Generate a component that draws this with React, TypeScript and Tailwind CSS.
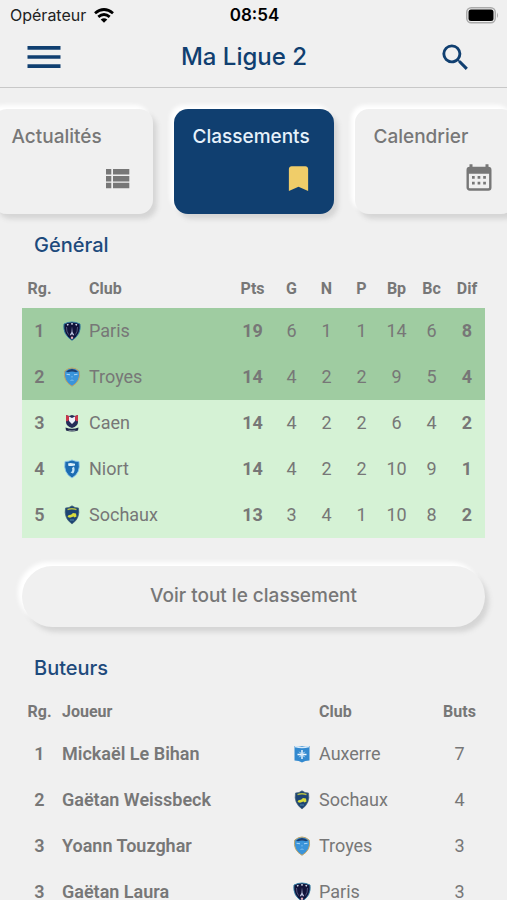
import type { ReactNode } from 'react';
import { MdBookmark, MdMenu, MdSearch } from 'react-icons/md';

type Club = 'Paris' | 'Troyes' | 'Caen' | 'Niort' | 'Sochaux' | 'Auxerre';

const standings: { rank: number; club: Club; points: number; stats: number[]; diff: number }[] = [
  { rank: 1, club: 'Paris', points: 19, stats: [6, 1, 1, 14, 6], diff: 8 },
  { rank: 2, club: 'Troyes', points: 14, stats: [4, 2, 2, 9, 5], diff: 4 },
  { rank: 3, club: 'Caen', points: 14, stats: [4, 2, 2, 6, 4], diff: 2 },
  { rank: 4, club: 'Niort', points: 14, stats: [4, 2, 2, 10, 9], diff: 1 },
  { rank: 5, club: 'Sochaux', points: 13, stats: [3, 4, 1, 10, 8], diff: 2 },
];

const scorers: { rank: number; name: string; club: Club; goals: number }[] = [
  { rank: 1, name: 'Mickaël Le Bihan', club: 'Auxerre', goals: 7 },
  { rank: 2, name: 'Gaëtan Weissbeck', club: 'Sochaux', goals: 4 },
  { rank: 3, name: 'Yoann Touzghar', club: 'Troyes', goals: 3 },
  { rank: 3, name: 'Gaëtan Laura', club: 'Paris', goals: 3 },
];

const crests: Record<Club, ReactNode> = {
  Paris: (
    <>
      <path d="M1 3Q9 -1 17 3Q18.500 13.500 9 19.300Q-0.500 13.500 1 3Z" fill="#11133a" stroke="#2f7ea6" strokeWidth="0.900" />
      <path d="M4 4l1.500-0.600M8 2.900h2M12.500 3.400l1.500 0.600" stroke="#d5ddec" strokeWidth="1.400" />
      <path d="M3.500 6Q3.300 10.500 5.500 13.500M14.500 6Q14.700 10.500 12.500 13.500" stroke="#6a7199" strokeWidth="0.700" fill="none" />
      <path d="M9 5.500L9.500 11L11.300 14.300H9.800L9 12.800L8.200 14.300H6.700L8.500 11Z" fill="#c3cce6" />
      <circle cx="9" cy="16.800" r="1.200" fill="#e3b0bd" />
    </>
  ),
  Troyes: (
    <>
      <path d="M1.800 4Q9 -2 16.200 4Q18.300 14 9 19.300Q-0.300 14 1.800 4Z" fill="#3a94da" stroke="#c2a464" strokeWidth="1" />
      <path d="M3 4.500Q9 -0.500 15 4.500L13 5.300Q9 3.800 5 5.300Z" fill="#1d3f70" />
      <path d="M3.500 7.200l3.500 0.600M14.500 7.200l-3.500 0.600" stroke="#a9d6f6" strokeWidth="1.100" />
      <path d="M7.500 13.500l1.500-0.500 1.500 0.500M9 9v1.500" stroke="#84c0ee" strokeWidth="0.900" fill="none" />
    </>
  ),
  Caen: (
    <>
      <path d="M3 2L6 3L9 2L12 3L15 2V9Q15 13 9 15Q3 13 3 9Z" fill="#252c58" />
      <path d="M3 2L6 3V7L4 8.500L3 8ZM15 2L12 3V7L14 8.500L15 8Z" fill="#c93549" />
      <path d="M6 3.500L9 5L12 3.500V8L9 11L6 8Z" fill="#eef0fa" />
      <path d="M2.500 14.500Q9 17 15.500 14.500L15 17.500Q9 19.500 3 17.500Z" fill="#1f2748" />
      <path d="M5.500 17.300Q9 18.200 12.500 17.300" stroke="#a9b9bd" strokeWidth="0.600" fill="none" />
    </>
  ),
  Niort: (
    <>
      <path d="M2 2.500Q5.500 2.500 9 1Q12.500 2.500 16 2.500Q18 14 9 19Q0 14 2 2.500Z" fill="#1c6cb2" stroke="#8cc5e9" strokeWidth="0.900" />
      <path d="M5 4.500L7.500 4L12 4.800L12 6.500L9 7L5.500 7Z" fill="#dceffb" />
      <path d="M11 7.500Q12.500 12 10 14.500L7.500 13.500Q10 12 9 9Z" fill="#c6e4f7" />
    </>
  ),
  Sochaux: (
    <>
      <path d="M2.500 3L6 2.500L9 0.800L12 2.500L15.500 3Q17.500 13 9 19Q0.500 13 2.500 3Z" fill="#1d4474" stroke="#47667a" strokeWidth="0.700" />
      <path d="M4.500 4.600Q9 3 13.500 4.600" stroke="#b5bd45" strokeWidth="1.500" fill="none" />
      <path d="M4.500 12Q5 9.500 8 9.800L10 8L13 8.500L13.500 11.500L11.500 12.500L10.500 11.500L7 12.800Z" fill="#d9dc3d" />
      <path d="M7 15h4" stroke="#5e9ab5" strokeWidth="0.800" />
    </>
  ),
  Auxerre: (
    <>
      <path d="M1.500 2L5 2.800L9 2L13 2.800L16.500 2V16.500Q12 16.500 9 18.500Q6 16.500 1.500 16.500Z" fill="#3289cf" />
      <path d="M2 2.500Q9 4.500 16 2.500" stroke="#d6eafa" strokeWidth="1.400" fill="none" />
      <path d="M9 6v9M4.500 10.500h9" stroke="#f2f9ff" strokeWidth="1.400" />
      <path d="M6.300 7.800l5.400 5.400M11.700 7.800l-5.400 5.400" stroke="#cde6f8" strokeWidth="1" />
    </>
  ),
};

function Crest({ club }: { club: Club }) {
  return (
    <svg viewBox="0 0 18 20" className="mx-auto h-5 w-[18px]" aria-hidden="true">
      {crests[club]}
    </svg>
  );
}

function ListIcon() {
  return (
    <svg viewBox="0 0 33 33" className="size-[33px]" fill="currentColor" aria-hidden="true">
      <path d="M5 7h5.300v5.500H5zM12 7h16.300v5.500H12zM5 13.900h5.300v5.500H5zM12 13.900h16.300v5.500H12zM5 20.800h5.300v5.500H5zM12 20.800h16.300v5.500H12z" />
    </svg>
  );
}

function CalendarIcon() {
  return (
    <svg viewBox="0 0 33 33" className="size-[33px]" fill="currentColor" aria-hidden="true">
      <rect x="4.700" y="6" width="22.600" height="21.500" rx="2" fill="none" stroke="currentColor" strokeWidth="2.400" />
      <path d="M4 6h24v5.800H4zM6.500 2.300h3V6h-3zM22.500 2.300h3V6h-3z" />
      <path d="M9 14h2.700v2.700H9zM14.600 14h2.700v2.700h-2.700zM20.200 14h2.700v2.700h-2.700zM9 19.700h2.700v2.700H9zM14.600 19.700h2.700v2.700h-2.700zM20.200 19.700h2.700v2.700h-2.700z" />
    </svg>
  );
}

function StatusBar() {
  return (
    <div className="grid h-[30px] shrink-0 grid-cols-3 items-center pr-2 pl-[10px] font-[Inter,sans-serif] text-black">
      <div className="flex items-center gap-2 text-base text-[#222]">
        Opérateur
        <svg viewBox="0 0 20 15" className="h-[15px] w-5 shrink-0" fill="none" stroke="#000" strokeWidth="2.800">
          <path d="M1 5.300Q10 -2.300 19 5.300" />
          <path d="M4.300 8.900Q10 4 15.700 8.900" />
          <path d="M10 14.800L6.700 11.500Q10 8.800 13.300 11.500Z" fill="#000" stroke="none" />
        </svg>
      </div>
      <div className="text-center text-[17px] leading-6 font-semibold">08:54</div>
      <svg viewBox="0 0 33 17" className="h-[17px] w-[33px] justify-self-end">
        <rect x="0.750" y="0.750" width="28.500" height="15" rx="4.500" fill="none" stroke="#aaa" strokeWidth="1.500" />
        <rect x="2.500" y="2.500" width="25" height="11.500" rx="2.500" fill="#000" />
        <path d="M31 5.500Q33 8.250 31 11Z" fill="#aaa" />
      </svg>
    </div>
  );
}

function Tab({ label, icon, active = false }: { label: string; icon: ReactNode; active?: boolean }) {
  const tone = active ? 'bg-[#103f70] text-[#e6f1fb]' : 'bg-[#f0f0f0] text-[#777]';
  return (
    <button
      type="button"
      aria-pressed={active}
      className={`flex h-[105px] w-[160px] shrink-0 flex-col justify-between rounded-[14px] px-[19px] pt-4 pb-[19px] shadow-[-4px_-4px_4px_#fff,4px_5px_5px_#d5d5d5] ${tone}`}
    >
      <span className="text-left text-[19px] leading-6 font-medium">{label}</span>
      <span className="self-end">{icon}</span>
    </button>
  );
}

function SectionTitle({ children }: { children: ReactNode }) {
  return <h2 className="mb-[11px] ml-3 text-xl leading-7 font-medium text-[#1d4a7c]">{children}</h2>;
}

function Standings() {
  return (
    <table className="w-full table-fixed text-center font-[Roboto,sans-serif] text-lg text-[#777]">
      <colgroup>
        <col className="w-[35px]" />
        <col className="w-[29px]" />
        <col />
        <col className="w-[43px]" />
        <col className="w-[35px]" />
        <col className="w-[35px]" />
        <col className="w-[35px]" />
        <col className="w-[35px]" />
        <col className="w-[35px]" />
        <col className="w-[36px]" />
      </colgroup>
      <thead>
        <tr className="h-[38px] text-base">
          <th>Rg.</th>
          <th />
          <th className="pl-[3px] text-left">Club</th>
          <th>Pts</th>
          <th>G</th>
          <th>N</th>
          <th>P</th>
          <th>Bp</th>
          <th>Bc</th>
          <th>Dif</th>
        </tr>
      </thead>
      <tbody>
        {standings.map((row) => (
          <tr key={row.rank} className={`h-[46px] ${row.rank <= 2 ? 'bg-[#9fcca1]' : 'bg-[#d5f2d5]'}`}>
            <td className="font-semibold">{row.rank}</td>
            <td>
              <Crest club={row.club} />
            </td>
            <td className="pl-[3px] text-left">{row.club}</td>
            <td className="font-bold">{row.points}</td>
            {row.stats.map((value, i) => (
              <td key={i}>{value}</td>
            ))}
            <td className="font-bold">{row.diff}</td>
          </tr>
        ))}
      </tbody>
    </table>
  );
}

function Scorers() {
  return (
    <table className="w-full table-fixed text-center font-[Roboto,sans-serif] text-lg text-[#777]">
      <colgroup>
        <col className="w-[35px]" />
        <col />
        <col className="w-[35px]" />
        <col className="w-[115px]" />
        <col className="w-[51px]" />
      </colgroup>
      <thead>
        <tr className="h-[38px] text-base">
          <th>Rg.</th>
          <th className="pl-[5px] text-left">Joueur</th>
          <th />
          <th className="text-left">Club</th>
          <th>Buts</th>
        </tr>
      </thead>
      <tbody>
        {scorers.map((row) => (
          <tr key={row.name} className="h-[46px]">
            <td className="font-semibold">{row.rank}</td>
            <td className="pl-[5px] text-left font-semibold">{row.name}</td>
            <td>
              <Crest club={row.club} />
            </td>
            <td className="text-left">{row.club}</td>
            <td>{row.goals}</td>
          </tr>
        ))}
      </tbody>
    </table>
  );
}

export default function App() {
  return (
    <div className="flex h-screen flex-col overflow-hidden bg-[#f0f0f0] font-[Inter,sans-serif]">
      <StatusBar />
      <header className="flex h-[58px] shrink-0 items-center justify-between border-b border-[#c8c8c8] pr-[34px] pb-[3px] pl-[22px] text-[#103f70]">
        <button type="button" aria-label="Menu">
          <MdMenu size={44} />
        </button>
        <h1 className="text-2xl font-medium">Ma Ligue 2</h1>
        <button type="button" aria-label="Rechercher" className="flex w-[51px] justify-end">
          <MdSearch size={35} />
        </button>
      </header>

      <main className="flex-1 overflow-y-auto [scrollbar-width:none]">
        <nav className="flex justify-center gap-[21px] overflow-hidden pt-[21px] pb-[17px]">
          <Tab label="Actualités" icon={<ListIcon />} />
          <Tab label="Classements" icon={<MdBookmark size={33} color="#f0cd69" />} active />
          <Tab label="Calendrier" icon={<CalendarIcon />} />
        </nav>

        <div className="px-[22px]">
          <section>
            <SectionTitle>Général</SectionTitle>
            <Standings />
            <button
              type="button"
              className="mt-7 mb-[27px] h-[61px] w-full rounded-full bg-[#f0f0f0] text-[19px] font-medium text-[#777] shadow-[-4px_-4px_4px_#fff,4px_5px_5px_#d5d5d5]"
            >
              Voir tout le classement
            </button>
          </section>
          <section>
            <SectionTitle>Buteurs</SectionTitle>
            <Scorers />
          </section>
        </div>
      </main>
    </div>
  );
}
